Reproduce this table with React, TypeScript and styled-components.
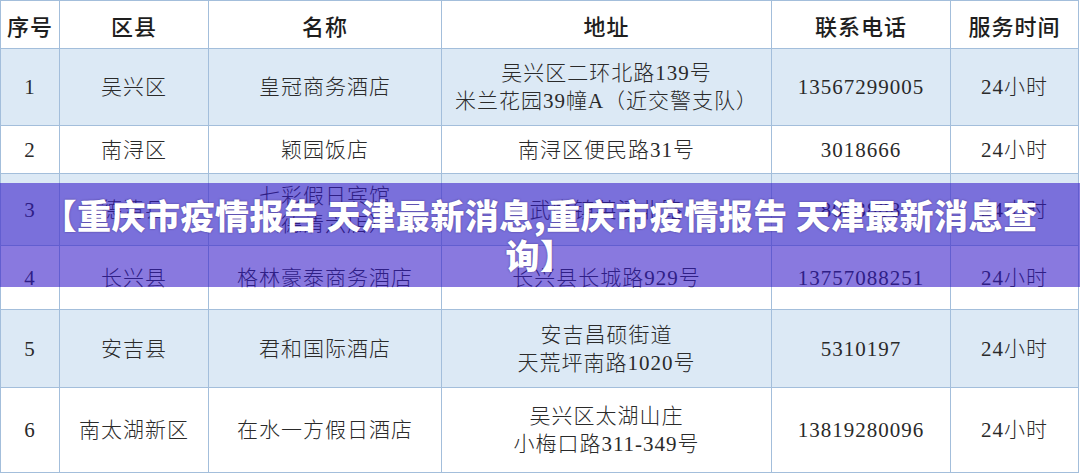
import React from 'react';
import styled, { createGlobalStyle } from 'styled-components';

const GlobalStyle = createGlobalStyle`
  html, body {
    margin: 0;
    padding: 0;
    background: #ffffff;
  }
  body {
    width: 1080px;
    height: 473px;
    overflow: hidden;
    font-family: 'Liberation Serif', 'Noto Sans CJK SC', serif;
  }
`;

interface Row {
  no: string;
  district: string;
  name: string[];
  address: string[];
  phone: string;
  hours: string;
  height: number;
}

const rows: Row[] = [
  { no: '1', district: '吴兴区', name: ['皇冠商务酒店'], address: ['吴兴区二环北路139号', '米兰花园39幢A（近交警支队）'], phone: '13567299005', hours: '24小时', height: 77 },
  { no: '2', district: '南浔区', name: ['颖园饭店'], address: ['南浔区便民路31号'], phone: '3018666', hours: '24小时', height: 48 },
  { no: '3', district: '德清县', name: ['七彩假日宾馆', '（德清六店）'], address: ['武康镇英溪北路'], phone: '8063888', hours: '24小时', height: 72 },
  { no: '4', district: '长兴县', name: ['格林豪泰商务酒店'], address: ['长兴县长城路929号'], phone: '13757088251', hours: '24小时', height: 64 },
  { no: '5', district: '安吉县', name: ['君和国际酒店'], address: ['安吉昌硕街道', '天荒坪南路1020号'], phone: '5310197', hours: '24小时', height: 78 },
  { no: '6', district: '南太湖新区', name: ['在水一方假日酒店'], address: ['吴兴区太湖山庄', '小梅口路311-349号'], phone: '13819280096', hours: '24小时', height: 85 },
];

const columns = [
  { title: '序号', width: 59 },
  { title: '区县', width: 149 },
  { title: '名称', width: 233 },
  { title: '地址', width: 330 },
  { title: '联系电话', width: 179 },
  { title: '服务时间', width: 128 },
];

const App: React.FC = () => {
  return (
    <>
      <GlobalStyle />
      <Page>
        <Table>
          <colgroup>
            {columns.map((c) => (
              <col key={c.title} style={{ width: c.width }} />
            ))}
          </colgroup>
          <thead>
            <tr>
              {columns.map((c) => (
                <HeadCell key={c.title}>{c.title}</HeadCell>
              ))}
            </tr>
          </thead>
          <tbody>
            {rows.map((r, i) => (
              <BodyRow key={r.no} striped={i % 2 === 0} rowHeight={r.height}>
                <Cell>{r.no}</Cell>
                <Cell>{r.district}</Cell>
                <Cell>
                  {r.name.map((l) => (
                    <Line key={l}>{l}</Line>
                  ))}
                </Cell>
                <Cell>
                  {r.address.map((l) => (
                    <Line key={l}>{l}</Line>
                  ))}
                </Cell>
                <Cell>{r.phone}</Cell>
                <Cell>{r.hours}</Cell>
              </BodyRow>
            ))}
          </tbody>
        </Table>

        <Banner>
          <BannerTitle>【重庆市疫情报告 天津最新消息,重庆市疫情报告 天津最新消息查询】</BannerTitle>
        </Banner>
      </Page>
    </>
  );
};

export default App;

const Page = styled.div`
  position: relative;
  width: 1080px;
  height: 473px;
  overflow: hidden;
`;

const Table = styled.table`
  width: 1078px;
  border-collapse: collapse;
  table-layout: fixed;
  color: #222222;
`;

const HeadCell = styled.th`
  height: 47px;
  padding: 0;
  border: 1px solid #a3bedb;
  background: #ffffff;
  font-family: 'Liberation Serif', 'Noto Sans CJK SC', serif;
  font-weight: 500;
  font-size: 22px;
  letter-spacing: 1px;
  color: #1e1e1e;
  text-align: center;
  vertical-align: middle;
`;

const BodyRow = styled.tr<{ striped: boolean; rowHeight: number }>`
  height: ${(p) => p.rowHeight}px;
  background: ${(p) => (p.striped ? '#dce9f5' : '#ffffff')};
`;

const Cell = styled.td`
  padding: 0;
  border: 1px solid #a3bedb;
  font-size: 21px;
  font-weight: 300;
  line-height: 28px;
  letter-spacing: 1px;
  color: #2a2a2a;
  text-align: center;
  vertical-align: middle;
`;

const Line = styled.div`
  white-space: nowrap;
`;

const Banner = styled.div`
  position: absolute;
  left: 0;
  right: 0;
  top: 183px;
  height: 104px;
  display: flex;
  align-items: center;
  justify-content: center;
  background: rgba(52, 24, 200, 0.58);
`;

const BannerTitle = styled.h1`
  margin: 0;
  max-width: 1000px;
  font-family: 'Noto Sans CJK SC', 'Noto Sans', sans-serif;
  font-weight: 900;
  font-size: 34px;
  line-height: 40px;
  letter-spacing: 0.5px;
  color: #ffffff;
  text-align: center;
  text-shadow: 0 0 2px rgba(40, 20, 90, 0.6);
`;
